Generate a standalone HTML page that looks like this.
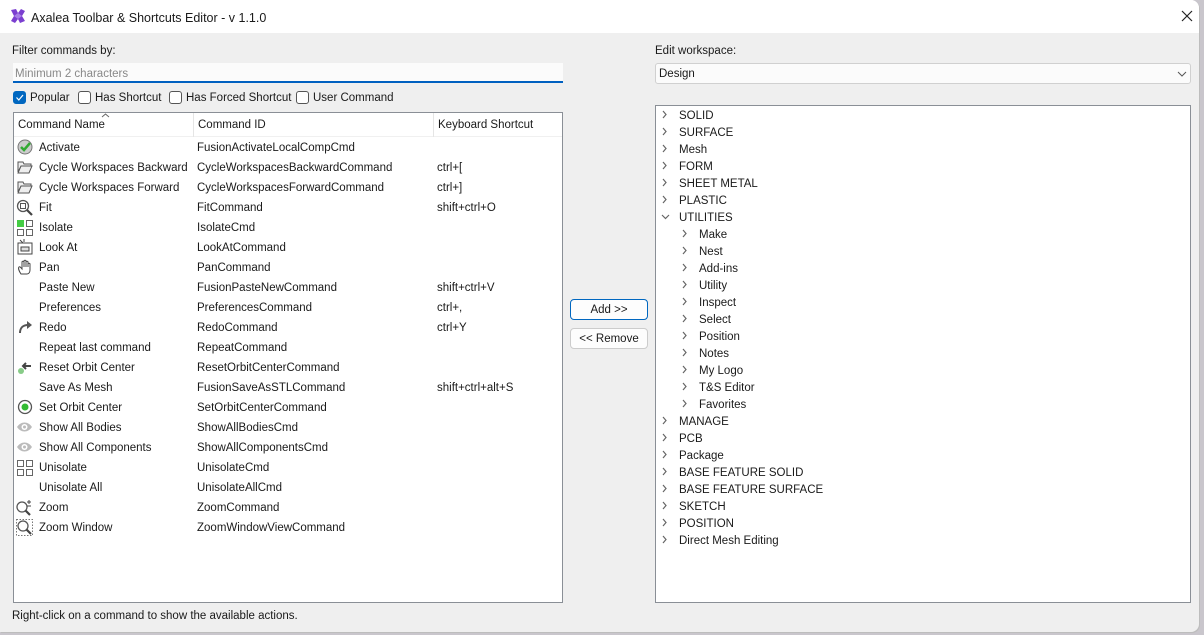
<!DOCTYPE html>
<html><head><meta charset="utf-8"><style>
*{box-sizing:border-box;margin:0;padding:0}
body{width:1204px;height:635px;background:#c9c6cc;font-family:"Liberation Sans",sans-serif;font-size:11.5px;color:#1a1a1a;position:relative;overflow:hidden}
.win{position:absolute;left:0;top:0;width:1199px;height:632px;background:#efefef;box-shadow:1px 1px 0 #bdbdbd;border-radius:0 8px 8px 0}
.title{position:absolute;left:0;top:0;width:100%;height:33px;background:#fff;border-radius:0 8px 0 0}
.abs{position:absolute;white-space:nowrap}
.cb{position:absolute;width:13px;height:13px;border:1px solid #555;border-radius:3px;background:#fff}
.box{position:absolute;background:#fff;border:1px solid #8a8f96}
.row{position:absolute;left:0;height:20px;line-height:20px;white-space:nowrap}
.tr{position:absolute;height:17px;line-height:17px;white-space:nowrap}
.btn{position:absolute;background:#fdfdfd;border:1px solid #ccc;border-radius:4px;text-align:center;line-height:20px}
</style></head><body>
<div class="win">
<div class="title">
<svg class="abs" style="left:10px;top:8px" width="16" height="16" viewBox="0 0 16 16"><path d="M1 2 L6 1 L8 5 L11 1 L15 3 L12 8 L15 13 L10 15 L8 11 L5 15 L1 13 L4 8 Z" fill="#7b3fd0"/><path d="M4 8 L8 5 L12 8 L8 11Z" fill="#a77fe6"/></svg>
<div class="abs" style="left:31px;top:11px;font-size:12.5px">Axalea Toolbar &amp; Shortcuts Editor - v 1.1.0</div>
<svg class="abs" style="left:1181px;top:10px" width="12" height="12"><path d="M1 1L11 11M11 1L1 11" stroke="#222" stroke-width="1.2"/></svg>
</div>
<div class="abs" style="left:12px;top:45px">Filter commands by:</div>
<div class="abs" style="left:13px;top:63px;width:550px;height:20px;background:#fbfbfb;border-bottom:2px solid #0060c0;color:#888;padding-left:2px;line-height:22px">Minimum 2 characters</div>
<div class="cb" style="left:13px;top:91px;background:#0067c0;border-color:#0067c0"><svg width="11" height="11" style="position:absolute;left:0;top:0"><path d="M2.5 5.5L4.8 8L9 3" stroke="#fff" fill="none" stroke-width="1.2"/></svg></div>
<div class="abs" style="left:30px;top:92px">Popular</div>
<div class="cb" style="left:78px;top:91px"></div><div class="abs" style="left:95px;top:92px">Has Shortcut</div>
<div class="cb" style="left:169px;top:91px"></div><div class="abs" style="left:186px;top:92px">Has Forced Shortcut</div>
<div class="cb" style="left:296px;top:91px"></div><div class="abs" style="left:313px;top:92px">User Command</div>

<div class="box" style="left:13px;top:112px;width:550px;height:491px">
<div class="abs" style="left:0;top:0;width:548px;height:24px;border-bottom:1px solid #f0f0f0"></div>
<div class="abs" style="left:179px;top:0;width:1px;height:24px;background:#e5e5e5"></div>
<div class="abs" style="left:419px;top:0;width:1px;height:24px;background:#e5e5e5"></div>
<div class="abs" style="left:4px;top:6px">Command Name</div>
<svg class="abs" style="left:87px;top:0" width="9" height="5"><path d="M1 4L4.5 1L8 4" stroke="#666" fill="none"/></svg>
<div class="abs" style="left:184px;top:6px">Command ID</div>
<div class="abs" style="left:424px;top:6px">Keyboard Shortcut</div>
<div style="position:absolute;left:0;top:25px;width:548px">
<div class="row" style="top:0"><svg class="abs" style="left:3px;top:1px" width="16" height="16"><circle cx="8" cy="8" r="7" fill="#ccc" stroke="#777"/><path d="M4 8L7 11L13 4" stroke="#3a3" stroke-width="2.5" fill="none"/></svg><span class="abs" style="left:25px">Activate</span><span class="abs" style="left:183px">FusionActivateLocalCompCmd</span></div>
<div class="row" style="top:20px"><svg class="abs" style="left:3px;top:2px" width="16" height="14"><path d="M1 2h5l1 2h7v2H4L1 12Z M4 6h11l-3 7H1Z" fill="#eee" stroke="#555"/></svg><span class="abs" style="left:25px">Cycle Workspaces Backward</span><span class="abs" style="left:183px">CycleWorkspacesBackwardCommand</span><span class="abs" style="left:423px">ctrl+[</span></div>
<div class="row" style="top:40px"><svg class="abs" style="left:3px;top:2px" width="16" height="14"><path d="M1 2h5l1 2h7v2H4L1 12Z M4 6h11l-3 7H1Z" fill="#eee" stroke="#555"/></svg><span class="abs" style="left:25px">Cycle Workspaces Forward</span><span class="abs" style="left:183px">CycleWorkspacesForwardCommand</span><span class="abs" style="left:423px">ctrl+]</span></div>
<div class="row" style="top:60px"><svg class="abs" style="left:2px;top:1px" width="17" height="17"><circle cx="7" cy="7" r="5.5" fill="#fff" stroke="#555" stroke-width="1.3"/><rect x="4.5" y="4.5" width="5" height="5" fill="none" stroke="#555"/><path d="M11 11L16 16" stroke="#444" stroke-width="2.2"/></svg><span class="abs" style="left:25px">Fit</span><span class="abs" style="left:183px">FitCommand</span><span class="abs" style="left:423px">shift+ctrl+O</span></div>
<div class="row" style="top:80px"><svg class="abs" style="left:3px;top:2px" width="16" height="16"><rect x="0.5" y="0.5" width="6" height="6" fill="#4c4" stroke="#4c4"/><rect x="9.5" y="0.5" width="6" height="6" fill="none" stroke="#666"/><rect x="0.5" y="9.5" width="6" height="6" fill="none" stroke="#666"/><rect x="9.5" y="9.5" width="6" height="6" fill="none" stroke="#666"/></svg><span class="abs" style="left:25px">Isolate</span><span class="abs" style="left:183px">IsolateCmd</span></div>
<div class="row" style="top:100px"><svg class="abs" style="left:3px;top:1px" width="16" height="16"><rect x="1" y="4" width="14" height="11" fill="#fff" stroke="#444"/><rect x="4" y="8" width="8" height="4" fill="#ddd" stroke="#444"/><path d="M3 1L6 4M7 0V3" stroke="#444"/></svg><span class="abs" style="left:25px">Look At</span><span class="abs" style="left:183px">LookAtCommand</span></div>
<div class="row" style="top:120px"><svg class="abs" style="left:3px;top:1px" width="16" height="16"><path d="M4 15C2 12 1 9 2 8c1-1 2 1 3 2V3c0-1 2-1 2 0v5V2c0-1 2-1 2 0v6V3c0-1 2-1 2 0v5V5c0-1 2-1 2 0v6c0 2-1 4-3 4Z" fill="#fff" stroke="#444"/></svg><span class="abs" style="left:25px">Pan</span><span class="abs" style="left:183px">PanCommand</span></div>
<div class="row" style="top:140px"><span class="abs" style="left:25px">Paste New</span><span class="abs" style="left:183px">FusionPasteNewCommand</span><span class="abs" style="left:423px">shift+ctrl+V</span></div>
<div class="row" style="top:160px"><span class="abs" style="left:25px">Preferences</span><span class="abs" style="left:183px">PreferencesCommand</span><span class="abs" style="left:423px">ctrl+,</span></div>
<div class="row" style="top:180px"><svg class="abs" style="left:3px;top:2px" width="16" height="14"><path d="M3 13C3 8 6 5 11 5" stroke="#555" stroke-width="2" fill="none"/><path d="M10 1L15 5L10 9Z" fill="#555"/></svg><span class="abs" style="left:25px">Redo</span><span class="abs" style="left:183px">RedoCommand</span><span class="abs" style="left:423px">ctrl+Y</span></div>
<div class="row" style="top:200px"><span class="abs" style="left:25px">Repeat last command</span><span class="abs" style="left:183px">RepeatCommand</span></div>
<div class="row" style="top:220px"><svg class="abs" style="left:3px;top:2px" width="16" height="14"><circle cx="4" cy="11" r="3" fill="#8c8"/><path d="M6 6H14M9 3L6 6L9 9" stroke="#444" stroke-width="2" fill="none"/></svg><span class="abs" style="left:25px">Reset Orbit Center</span><span class="abs" style="left:183px">ResetOrbitCenterCommand</span></div>
<div class="row" style="top:240px"><span class="abs" style="left:25px">Save As Mesh</span><span class="abs" style="left:183px">FusionSaveAsSTLCommand</span><span class="abs" style="left:423px">shift+ctrl+alt+S</span></div>
<div class="row" style="top:260px"><svg class="abs" style="left:3px;top:1px" width="16" height="16"><circle cx="8" cy="8" r="6.5" fill="#fff" stroke="#555" stroke-width="1.3"/><circle cx="8" cy="8" r="3.5" fill="#3b3"/></svg><span class="abs" style="left:25px">Set Orbit Center</span><span class="abs" style="left:183px">SetOrbitCenterCommand</span></div>
<div class="row" style="top:280px"><svg class="abs" style="left:2px;top:3px" width="17" height="12"><path d="M1 6C5 0 12 0 16 6C12 12 5 12 1 6Z" fill="#bbb"/><circle cx="8.5" cy="6" r="3" fill="#fff"/><circle cx="8.5" cy="6" r="1.5" fill="#bbb"/></svg><span class="abs" style="left:25px">Show All Bodies</span><span class="abs" style="left:183px">ShowAllBodiesCmd</span></div>
<div class="row" style="top:300px"><svg class="abs" style="left:2px;top:3px" width="17" height="12"><path d="M1 6C5 0 12 0 16 6C12 12 5 12 1 6Z" fill="#bbb"/><circle cx="8.5" cy="6" r="3" fill="#fff"/><circle cx="8.5" cy="6" r="1.5" fill="#bbb"/></svg><span class="abs" style="left:25px">Show All Components</span><span class="abs" style="left:183px">ShowAllComponentsCmd</span></div>
<div class="row" style="top:320px"><svg class="abs" style="left:3px;top:2px" width="16" height="16"><rect x="0.5" y="0.5" width="6" height="6" fill="none" stroke="#666"/><rect x="9.5" y="0.5" width="6" height="6" fill="none" stroke="#666"/><rect x="0.5" y="9.5" width="6" height="6" fill="none" stroke="#666"/><rect x="9.5" y="9.5" width="6" height="6" fill="none" stroke="#666"/></svg><span class="abs" style="left:25px">Unisolate</span><span class="abs" style="left:183px">UnisolateCmd</span></div>
<div class="row" style="top:340px"><span class="abs" style="left:25px">Unisolate All</span><span class="abs" style="left:183px">UnisolateAllCmd</span></div>
<div class="row" style="top:360px"><svg class="abs" style="left:2px;top:1px" width="17" height="17"><circle cx="6" cy="8" r="5" fill="#fff" stroke="#555" stroke-width="1.3"/><path d="M9.5 11.5L14 16" stroke="#444" stroke-width="2.2"/><path d="M13 1V5M11 3H15M11 7H15" stroke="#444"/></svg><span class="abs" style="left:25px">Zoom</span><span class="abs" style="left:183px">ZoomCommand</span></div>
<div class="row" style="top:380px"><svg class="abs" style="left:2px;top:1px" width="17" height="17"><rect x="0.5" y="0.5" width="16" height="16" fill="none" stroke="#777" stroke-dasharray="1.5 1.5"/><circle cx="7" cy="7" r="5" fill="#fff" stroke="#555" stroke-width="1.3"/><path d="M10.5 10.5L15 15" stroke="#444" stroke-width="2.2"/></svg><span class="abs" style="left:25px">Zoom Window</span><span class="abs" style="left:183px">ZoomWindowViewCommand</span></div>
</div>
</div>

<div class="btn" style="left:570px;top:299px;width:78px;height:21px;border:1px solid #0067c0">Add &gt;&gt;</div>
<div class="btn" style="left:570px;top:328px;width:78px;height:21px">&lt;&lt; Remove</div>

<div class="abs" style="left:655px;top:45px">Edit workspace:</div>
<div class="abs" style="left:655px;top:63px;width:536px;height:21px;background:#fbfbfb;border:1px solid #d0d0d0;border-radius:3px;padding-left:3px;line-height:21px">Design</div>
<svg class="abs" style="left:1177px;top:71px" width="10" height="6"><path d="M1 1L5 5L9 1" stroke="#555" fill="none"/></svg>

<div class="box" style="left:655px;top:105px;width:536px;height:498px">
<div style="position:absolute;left:0;top:1px;width:530px">
<div class="tr" style="top:1px;left:23px">SOLID</div>
<div class="tr" style="top:18px;left:23px">SURFACE</div>
<div class="tr" style="top:35px;left:23px">Mesh</div>
<div class="tr" style="top:52px;left:23px">FORM</div>
<div class="tr" style="top:69px;left:23px">SHEET METAL</div>
<div class="tr" style="top:86px;left:23px">PLASTIC</div>
<div class="tr" style="top:103px;left:23px">UTILITIES</div>
<div class="tr" style="top:120px;left:43px">Make</div>
<div class="tr" style="top:137px;left:43px">Nest</div>
<div class="tr" style="top:154px;left:43px">Add-ins</div>
<div class="tr" style="top:171px;left:43px">Utility</div>
<div class="tr" style="top:188px;left:43px">Inspect</div>
<div class="tr" style="top:205px;left:43px">Select</div>
<div class="tr" style="top:222px;left:43px">Position</div>
<div class="tr" style="top:239px;left:43px">Notes</div>
<div class="tr" style="top:256px;left:43px">My Logo</div>
<div class="tr" style="top:273px;left:43px">T&amp;S Editor</div>
<div class="tr" style="top:290px;left:43px">Favorites</div>
<div class="tr" style="top:307px;left:23px">MANAGE</div>
<div class="tr" style="top:324px;left:23px">PCB</div>
<div class="tr" style="top:341px;left:23px">Package</div>
<div class="tr" style="top:358px;left:23px">BASE FEATURE SOLID</div>
<div class="tr" style="top:375px;left:23px">BASE FEATURE SURFACE</div>
<div class="tr" style="top:392px;left:23px">SKETCH</div>
<div class="tr" style="top:409px;left:23px">POSITION</div>
<div class="tr" style="top:426px;left:23px">Direct Mesh Editing</div>
</div>
<svg class="abs" style="left:0;top:0" width="60" height="450" fill="none" stroke="#666" stroke-width="1.2">
<path d="M7 5L10 8.5L7 12"/>
<path d="M7 22L10 25.5L7 29M7 39L10 42.5L7 46M7 56L10 59.5L7 63M7 73L10 76.5L7 80M7 90L10 93.5L7 97"/>
<path d="M6 109L9.5 112.5L13 109"/>
<path d="M27 124L30 127.5L27 131M27 141L30 144.5L27 148M27 158L30 161.5L27 165M27 175L30 178.5L27 182M27 192L30 195.5L27 199M27 209L30 212.5L27 216M27 226L30 229.5L27 233M27 243L30 246.5L27 250M27 260L30 263.5L27 267M27 277L30 280.5L27 284M27 294L30 297.5L27 301"/>
<path d="M7 311L10 314.5L7 318M7 328L10 331.5L7 335M7 345L10 348.5L7 352M7 362L10 365.5L7 369M7 379L10 382.5L7 386M7 396L10 399.5L7 403M7 413L10 416.5L7 420M7 430L10 433.5L7 437"/>
</svg>
</div>

<div class="abs" style="left:12px;top:610px">Right-click on a command to show the available actions.</div>
</div>
</body></html>
